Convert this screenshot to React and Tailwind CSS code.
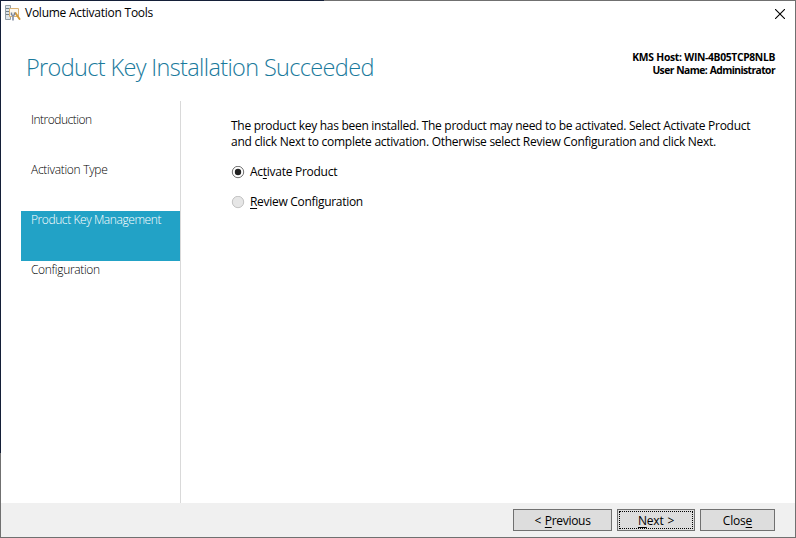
const steps = [
  { label: 'Introduction', track: 'tracking-[-0.5px]' },
  { label: 'Activation Type', track: 'tracking-[-0.3px]' },
  { label: 'Product Key Management', track: 'tracking-[-0.42px]', active: true },
  { label: 'Configuration', track: 'tracking-[-0.33px]' },
];

function AppIcon() {
  return (
    <svg width="17" height="17" viewBox="0 0 17 17" className="shrink-0">
      <path d="M1.500.5h5v14h-5z" fill="#dfe5e8" stroke="#94a0a7" />
      <path d="M2 3.500h4M2 6.500h3M2 9.500h3" stroke="#71818b" />
      <path d="M5.500 3.500h9v8h-9z" fill="#fdf8ee" stroke="#d9b274" />
      <path d="M11.500 8l4 6" stroke="#d49a3a" strokeWidth="2" strokeLinecap="round" />
      <path d="M7.500 7.500v2l1.500 1.500 1.500-1.500v-2" fill="none" stroke="#78849a" strokeWidth="1.500" />
      <path d="M9 10.500v5" stroke="#9099ac" strokeWidth="1.800" />
    </svg>
  );
}

function Radio({ checked, track, children }) {
  return (
    <div className="flex h-[16px] items-center">
      <svg width="14" height="13" viewBox="0 0 14 13" className="mr-[5px] shrink-0">
        <circle cx="7" cy="6" r="5.700" fill={checked ? '#fff' : '#e6e6e6'} stroke={checked ? '#707070' : '#c3c3c3'} />
        {checked && <circle cx="7" cy="6" r="3.200" fill="#212121" />}
      </svg>
      <span className={`whitespace-nowrap leading-[16px] ${track}`}>{children}</span>
    </div>
  );
}

function Key({ children }) {
  return <span className="underline decoration-1 underline-offset-2">{children}</span>;
}

export default function App() {
  return (
    <div className="relative flex h-[538px] w-[796px] flex-col border border-[#707070] bg-white font-['Open_Sans','Noto_Sans',sans-serif] text-[12px] text-black">
      <div className="absolute -left-px -top-px h-px w-[324px] bg-[#141f38]" />
      <div className="absolute -left-px -top-px h-[453px] w-px bg-[#141f38]" />
      <header className="flex h-[25px] shrink-0 items-center pl-[3px] pr-[10px]">
        <AppIcon />
        <span className="-mt-[2px] ml-[4px] whitespace-nowrap tracking-[-0.25px]">Volume Activation Tools</span>
        <svg width="10" height="10" viewBox="0 0 10 10" className="ml-auto">
          <path d="M0 0l10 10M10 0L0 10" stroke="#000" strokeWidth="1.100" />
        </svg>
      </header>
      <div className="flex h-[75px] shrink-0 justify-between pl-[25px] pr-[20px]">
        <h1 className="mt-[24px] whitespace-nowrap text-[23.5px] font-light leading-[34px] tracking-[-0.65px] text-[#1a7a9c]">
          Product Key Installation Succeeded
        </h1>
        <div className="mt-[25px] whitespace-nowrap text-right text-[10.3px] font-bold leading-[13px]">
          <div className="tracking-[-0.33px] [word-spacing:0.5px]">KMS Host: WIN-4B05TCP8NLB</div>
          <div className="tracking-[-0.58px] [word-spacing:0.5px]">User Name: Administrator</div>
        </div>
      </div>
      <div className="flex h-[402px] shrink-0 pl-[20px]">
        <nav className="flex w-[160px] flex-col border-r border-[#d9d9d9] pt-[10px]">
          {steps.map((s) => (
            <div
              key={s.label}
              className={`h-[50px] whitespace-nowrap pl-[10px] font-light leading-[18px] ${s.track} ${s.active ? 'bg-[#22a2c6] text-white' : 'text-black'}`}
            >
              {s.label}
            </div>
          ))}
        </nav>
        <main className="pl-[50px] pt-[17px]">
          <p className="whitespace-nowrap leading-[16px]">
            <span className="block tracking-[-0.285px]">The product key has been installed. The product may need to be activated. Select Activate Product</span>
            <span className="block tracking-[-0.275px]">and click Next to complete activation. Otherwise select Review Configuration and click Next.</span>
          </p>
          <div className="mt-[14px] flex flex-col gap-[14px]">
            <Radio checked track="tracking-[-0.27px]">Ac<Key>t</Key>ivate Product</Radio>
            <Radio track="tracking-[-0.3px]"><Key>R</Key>eview Configuration</Radio>
          </div>
        </main>
      </div>
      <footer className="flex grow items-start justify-end gap-[5px] bg-[#f0f0f0] pr-[20px] pt-[6px] tracking-[-0.2px]">
        <button className="h-[22px] w-[99px] border border-[#707070] bg-[#ddd] pt-px leading-[20px] tracking-[-0.3px] [word-spacing:1px]">&lt; <Key>P</Key>revious</button>
        <button className="h-[22px] w-[78px] border border-[#707070] bg-[#ddd] p-px">
          <span className="block h-[18px] border border-dotted border-black leading-[18px] tracking-[-0.2px] [word-spacing:1px]"><Key>N</Key>ext &gt;</span>
        </button>
        <button className="h-[22px] w-[75px] border border-[#707070] bg-[#ddd] pt-px leading-[20px]">Clos<Key>e</Key></button>
      </footer>
    </div>
  );
}
